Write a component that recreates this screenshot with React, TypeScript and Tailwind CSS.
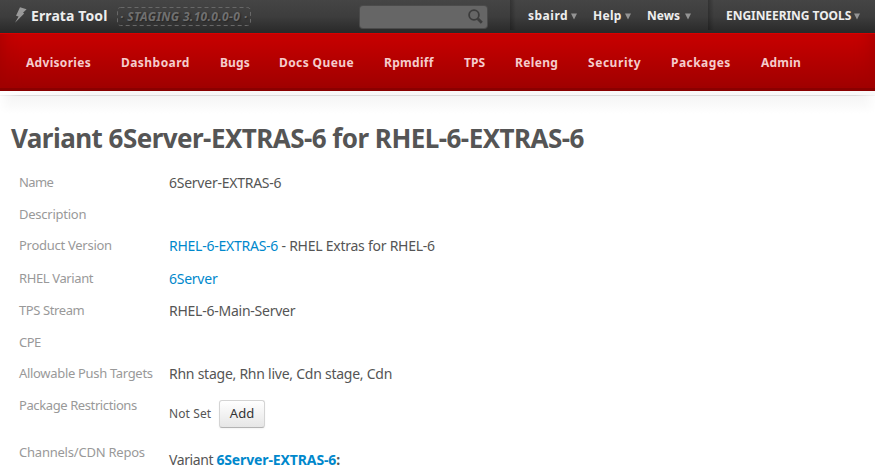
import type { ReactNode } from "react";

const navItems = [
  { label: "Advisories", cls: "w-[65px] tracking-[0.3px]" },
  { label: "Dashboard", cls: "w-[69px] tracking-[0.45px]" },
  { label: "Bugs", cls: "w-[29px] tracking-[0.1px]" },
  { label: "Docs Queue", cls: "w-[75px] tracking-[0.4px]" },
  { label: "Rpmdiff", cls: "w-[50px] tracking-[0.3px]" },
  { label: "TPS", cls: "w-[21px]" },
  { label: "Releng", cls: "w-[43px] tracking-[0.35px]" },
  { label: "Security", cls: "w-[53px] tracking-[0.55px]" },
  { label: "Packages", cls: "w-[60px] tracking-[0.45px]" },
  { label: "Admin", cls: "w-[40px] tracking-[0.2px]" },
];

function Caret() {
  return (
    <svg width="6" height="7" viewBox="0 0 6 7" className="shrink-0" fill="#949494">
      <path d="M0 0.5h6L3 6.5z" />
    </svg>
  );
}

function Row({ label, h, cls = "", children }: { label: string; h: string; cls?: string; children?: ReactNode }) {
  return (
    <div className={`flex ${h}`}>
      <dt className="-mt-px w-[150px] shrink-0 text-[13px] leading-5 text-[#999]">
        <span className={cls}>{label}</span>
      </dt>
      <dd className="text-sm leading-5 tracking-[-0.25px]">{children}</dd>
    </div>
  );
}

export default function App() {
  return (
    <div className="h-[475px] w-[875px] overflow-hidden whitespace-nowrap bg-white font-['Noto_Sans',sans-serif] text-[#555]">
      <header className="flex h-[33px] bg-linear-to-b from-[#454545] via-[#3d3d3d] to-[#292929] font-bold text-[#eee]">
        <svg width="13" height="16" viewBox="0 0 13 16" className="mt-[7px] ml-[14px] shrink-0" fill="#999">
          <path d="M6 0.3L12.6 2.2 9 5.7 10.2 6.4 1 15.8 4.6 9.6 2 8.7z" />
        </svg>
        <div className="ml-1 w-[86px] text-sm leading-[32px] tracking-[0.1px]">Errata Tool</div>
        <div className="relative mt-[7px] h-[19px] w-[134px]">
          <svg width="134" height="19" className="absolute inset-0" fill="none" stroke="#686868">
            <rect x="0.5" y="0.5" width="133" height="18" rx="3" strokeDasharray="4 3" />
          </svg>
          <div className="pl-[3px] text-[12px] leading-[19px] tracking-[0.35px] text-[#707070] italic [text-shadow:1px_1px_2px_#222]">· STAGING 3.10.0.0-0 ·</div>
        </div>
        <div className="mt-[6px] ml-[109px] flex h-[22px] w-[127px] justify-end rounded-[3px] bg-[#666] pt-[3px] pr-1 shadow-[0_0_0_1px_#4b4b4b]">
          <svg width="15" height="15" viewBox="0 0 15 15" fill="none" stroke="#3c3c3c">
            <circle cx="6" cy="6" r="4.9" strokeWidth="1.8" />
            <path d="M9.8 9.8l4 4" strokeWidth="2.8" />
          </svg>
        </div>
        <div className="ml-[23px] flex h-[30px] w-[198px] bg-linear-to-r from-black/25 to-transparent to-[6px] text-[12px] leading-[32px]">
          <div className="ml-[18px] flex h-[33px] w-[65px] items-center gap-[3px]"><span className="-mt-px w-[40px] tracking-[0.5px]">sbaird</span><Caret /></div>
          <div className="flex h-[33px] w-[54px] items-center gap-[3px]"><span className="-mt-px w-[29px] tracking-[0.3px]">Help</span><Caret /></div>
          <div className="flex h-[33px] items-center gap-[5px]"><span className="-mt-px w-[33px]">News</span><Caret /></div>
        </div>
        <div className="h-[30px] flex-1 bg-linear-to-r from-black/25 to-transparent to-[6px]">
          <div className="flex h-[33px] items-center gap-[2px] pl-[18px] text-[12px] leading-[32px]">
            <span className="-mt-px w-[126px] tracking-[-0.05px]">ENGINEERING TOOLS</span><Caret />
          </div>
        </div>
      </header>
      <nav className="flex h-[58px] gap-[30px] border-t border-b-[3px] border-t-[#d80000] border-b-[#8a0000] bg-linear-to-b from-[#c80000] to-[#a00000] pl-[26px] text-[12px] leading-[57px] font-bold text-[#f5cccc] shadow-[inset_20px_0_20px_-20px_#a00000,inset_-20px_0_20px_-20px_#a00000]">
        {navItems.map((n) => (
          <a key={n.label} className={n.cls}>{n.label}</a>
        ))}
      </nav>
      <div className="h-[4px] bg-linear-to-r from-white via-[#f7f7f7] via-10% to-[#f9f9f9]" />
      <div className="h-px bg-linear-[90deg,#f4f4f4_0,#dcdcdc_20px,#dcdcdc_855px,#f4f4f4_875px]" />
      <main className="bg-linear-to-b from-[#f5f5f5] to-white to-[18px] shadow-[inset_14px_0_12px_-10px_#fff,inset_-14px_0_12px_-10px_#fff]">
        <h1 className="pt-[22px] pl-[11px] text-[26px] leading-10 font-bold tracking-[-0.54px] text-[#555]">Variant 6Server-EXTRAS-6 for RHEL-6-EXTRAS-6</h1>
        <dl className="mt-[15px] pl-[19px]">
          <Row label="Name" h="h-8" cls="tracking-[-0.6px]">6Server-EXTRAS-6</Row>
          <Row label="Description" h="h-[31px]" cls="tracking-[-0.25px]" />
          <Row label="Product Version" h="h-[33px]" cls="tracking-[-0.27px]"><a className="text-[#0088cc]">RHEL-6-EXTRAS-6</a> <span>- RHEL Extras for RHEL-6</span></Row>
          <Row label="RHEL Variant" h="h-8" cls="tracking-[-0.38px]"><a className="text-[#0088cc]">6Server</a></Row>
          <Row label="TPS Stream" h="h-8" cls="tracking-[-0.4px]">RHEL-6-Main-Server</Row>
          <Row label="CPE" h="h-[31px]" cls="tracking-[-0.5px]" />
          <Row label="Allowable Push Targets" h="h-8" cls="tracking-[-0.32px]">Rhn stage, Rhn live, Cdn stage, Cdn</Row>
          <Row label="Package Restrictions" h="h-[47px]" cls="tracking-[-0.4px]">
            <div className="mt-1 flex items-center text-[13px] tracking-normal">
              <span className="w-[50px] text-[12px] tracking-[0.1px]">Not Set</span>
              <button className="h-7 w-[46px] rounded-[3px] border border-[#d4d4d4] border-b-[#b3b3b3] bg-linear-to-b from-white to-[#e6e6e6] pb-[2px] text-[13px] leading-none text-[#333] shadow-[0_1px_2px_rgba(0,0,0,0.05)]">Add</button>
            </div>
          </Row>
          <Row label="Channels/CDN Repos" h="h-8" cls="tracking-[-0.22px]"><div className="pt-[7px]"><span className="tracking-[-0.4px]">Variant </span><b className="tracking-[-0.12px] text-[#0088cc]">6Server-EXTRAS-6</b><b>:</b></div></Row>
        </dl>
      </main>
    </div>
  );
}
